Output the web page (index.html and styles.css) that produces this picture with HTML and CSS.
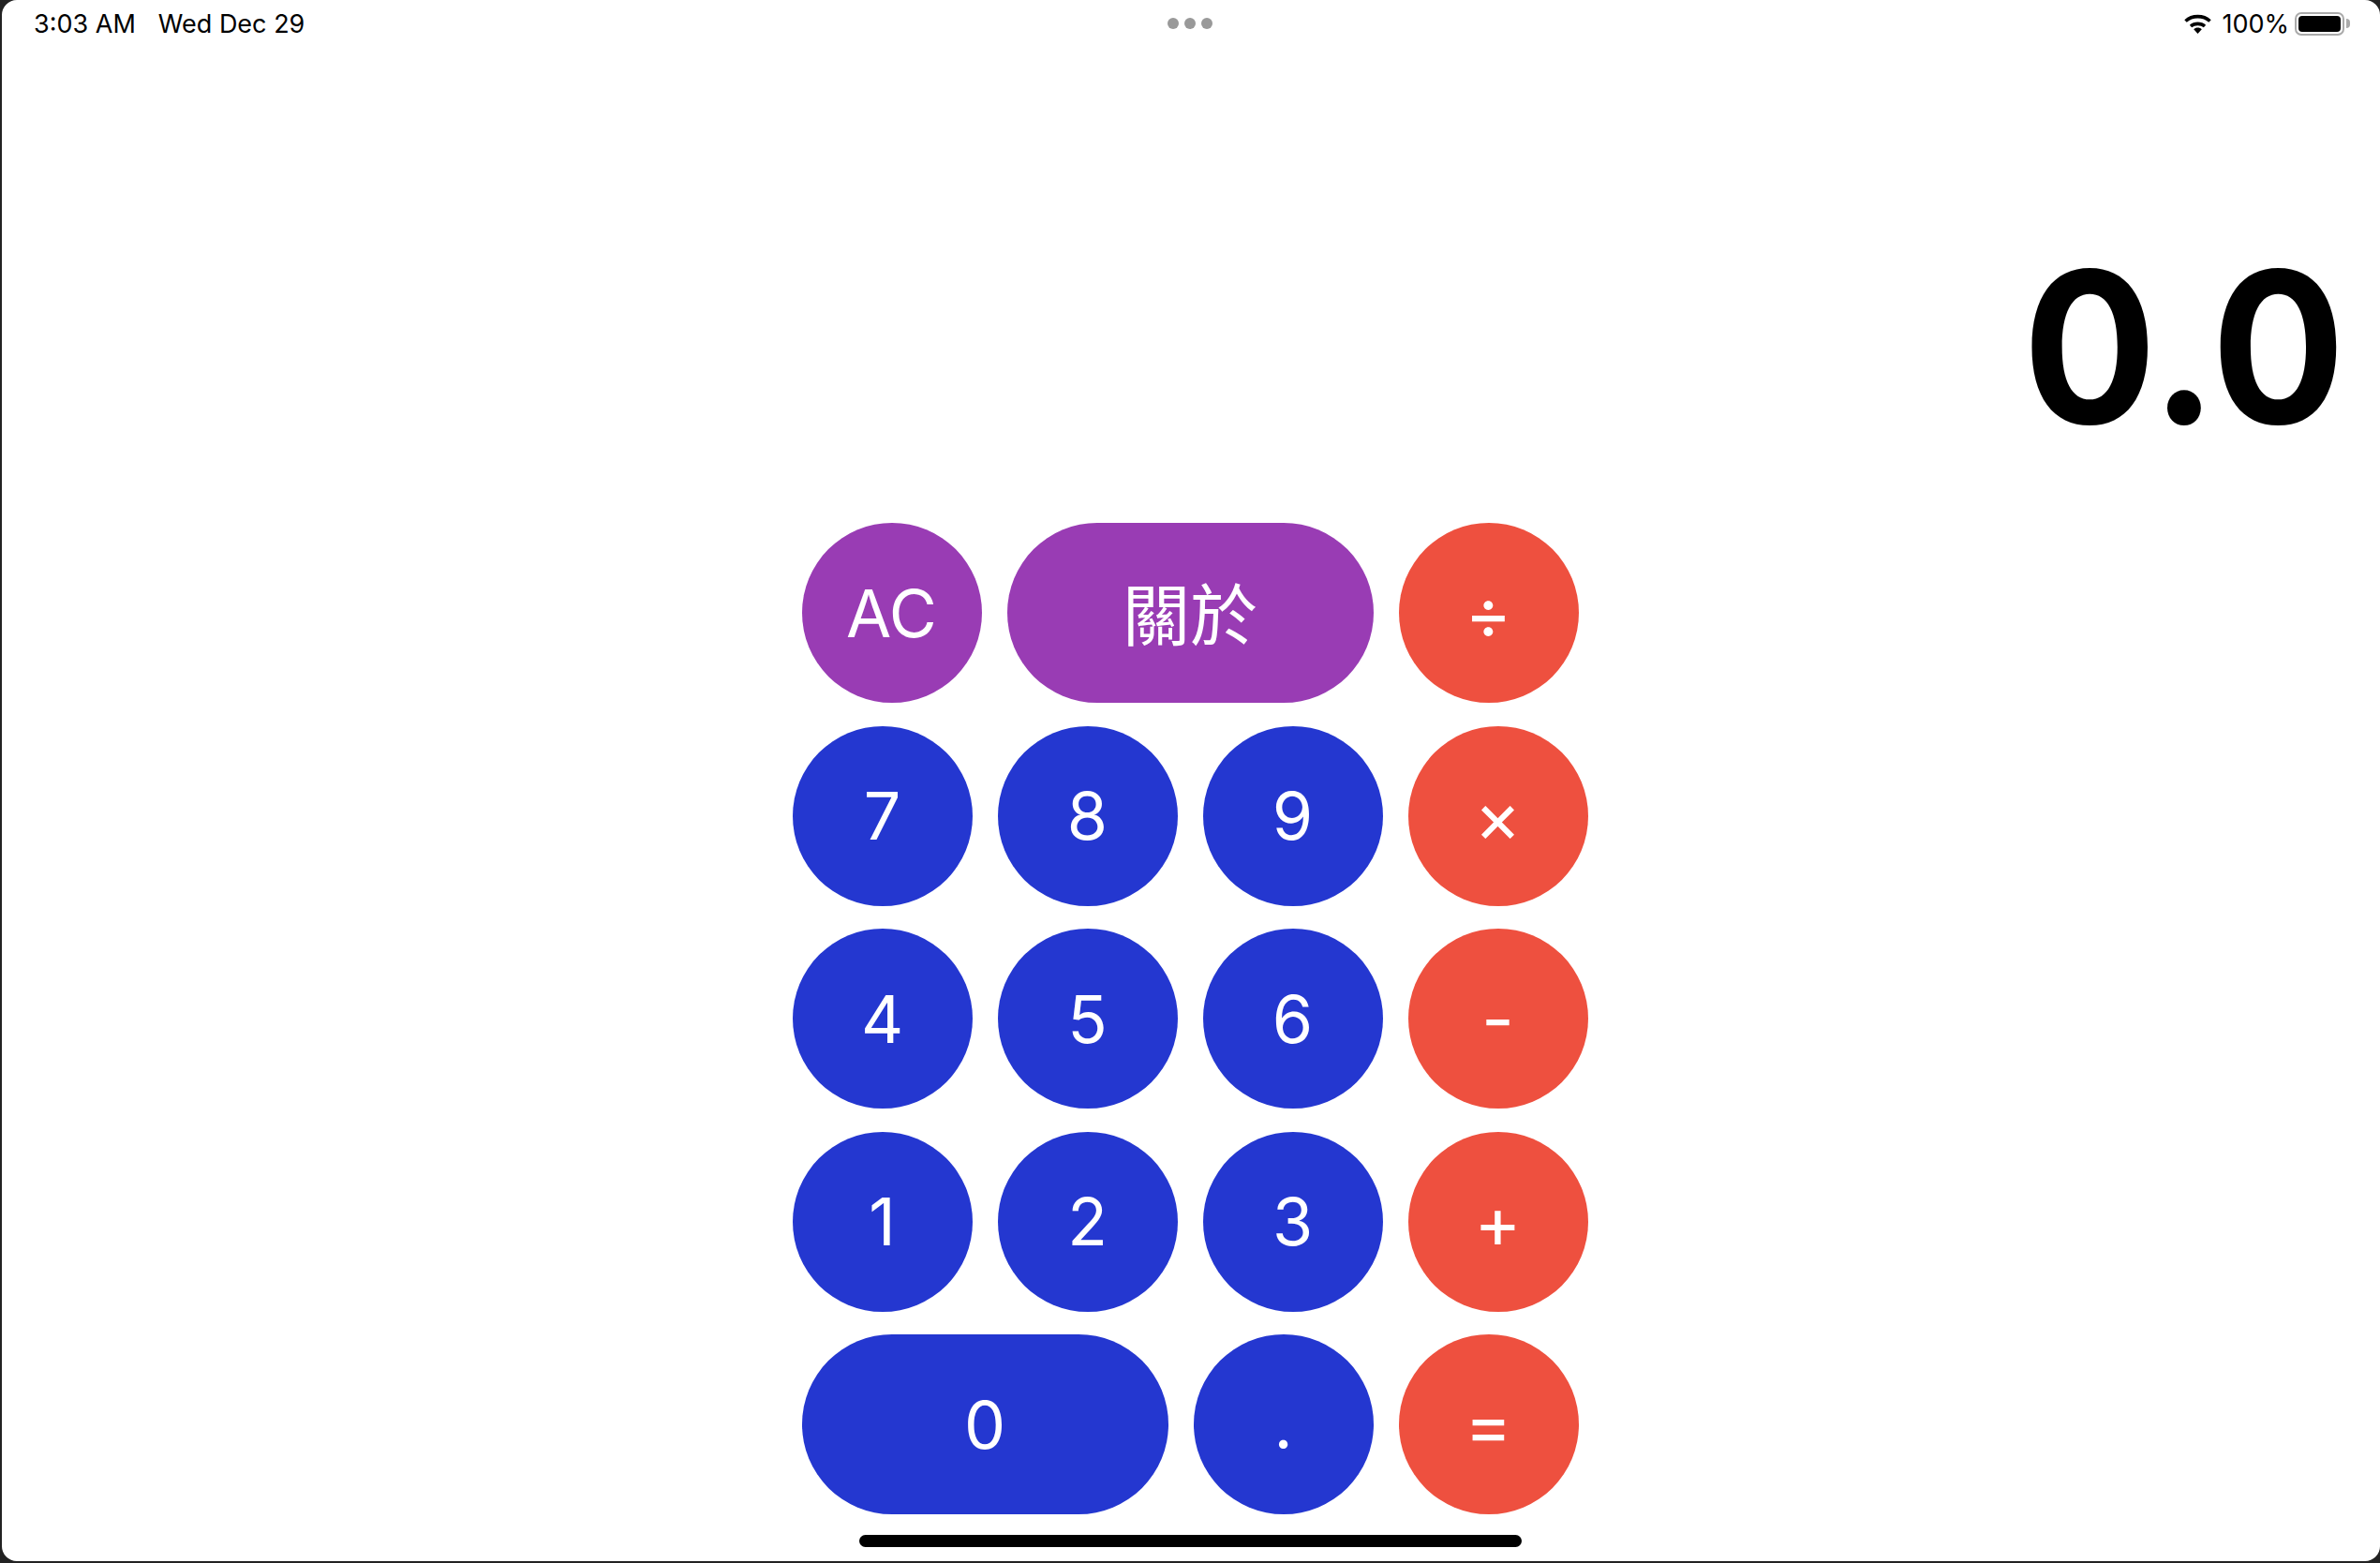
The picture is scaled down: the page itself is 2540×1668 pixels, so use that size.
FILE: index.html
```html
<!DOCTYPE html>
<html lang="en">
<head>
    <meta charset="UTF-8">
    <meta name="viewport" content="width=device-width, initial-scale=1.0">
    <title>Calculator</title>
    <link rel="stylesheet" href="styles.css">
</head>
<body>

<div class="screen">
    <header class="status">
        <div class="status-left">
            <span>3:03 AM</span>
            <span>Wed Dec 29</span>
        </div>
        <div class="dots"><i></i><i></i><i></i></div>
        <div class="status-right">
            <svg class="wifi" viewBox="0 0 31 22" width="31" height="22">
                <path d="M2.500 8.500C9.500 2 21.500 2 28.500 8.500" fill="none" stroke="#000" stroke-width="3.600"/>
                <path d="M8 14C12 10.500 19 10.500 23 14" fill="none" stroke="#000" stroke-width="3.600"/>
                <path d="M15.500 15.500C13.700 15.500 12.300 16.100 11.200 17.200L15.500 22L19.800 17.200C18.700 16.100 17.300 15.500 15.500 15.500Z"/>
            </svg>
            <span class="percent">100%</span>
            <div class="battery"><div class="battery-fill"></div></div>
            <div class="battery-cap"></div>
        </div>
    </header>

    <div class="display">0.0</div>

    <section class="keypad">
        <div class="row">
            <button class="key purple">AC</button>
            <button class="key wide purple cjk">關於</button>
            <button class="key red op">÷</button>
        </div>
        <div class="row">
            <button class="key blue">7</button>
            <button class="key blue">8</button>
            <button class="key blue">9</button>
            <button class="key red op">×</button>
        </div>
        <div class="row">
            <button class="key blue">4</button>
            <button class="key blue">5</button>
            <button class="key blue">6</button>
            <button class="key red op">-</button>
        </div>
        <div class="row">
            <button class="key blue">1</button>
            <button class="key blue">2</button>
            <button class="key blue">3</button>
            <button class="key red op">+</button>
        </div>
        <div class="row">
            <button class="key wide blue">0</button>
            <button class="key blue">.</button>
            <button class="key red op">=</button>
        </div>
    </section>

    <div class="home-bar"></div>
</div>

</body>
</html>
```

FILE: styles.css
```css
/* calculator screen */
html, body {
    margin: 0;
    padding: 0;
    background-color: #222;
}
.screen {
    box-sizing: border-box;
    width: 2538px;
    height: 1666px;
    margin-left: 2px;
    padding-right: 2px;
    background-color: #fff;
    border-radius: 16px;
    overflow: hidden;
    font-family: Inter, "Noto Sans CJK TC", sans-serif;
    color: #000;
    display: flex;
    flex-direction: column;
}
.status {
    height: 50px;
    display: grid;
    grid-template-columns: 1fr auto 1fr;
    align-items: center;
    padding: 0 30px;
    font-size: 27px;
}
.status-left {
    display: flex;
    gap: 24px;
    padding-left: 4px;
}
.status-right {
    display: flex;
    align-items: center;
    justify-content: flex-end;
}
.dots {
    display: flex;
    gap: 6px;
}
.dots i {
    display: block;
    width: 12px;
    height: 12px;
    border-radius: 50%;
    background-color: #999;
}
.wifi {
    margin-right: 10px;
}
.percent {
    margin-right: 6px;
}
.battery {
    box-sizing: border-box;
    width: 53px;
    height: 25px;
    padding: 2px;
    border: 2px solid #aaa;
    border-radius: 7px;
}
.battery-fill {
    height: 100%;
    background-color: #000;
    border-radius: 4px;
}
.battery-cap {
    width: 4px;
    height: 10px;
    margin-left: 2px;
    background-color: #aaa;
    border-radius: 0 4px 4px 0;
}
.display {
    height: 508px;
    box-sizing: border-box;
    padding: 211px 35px 0 0;
    text-align: right;
    font-size: 212px;
    font-weight: 700;
    line-height: 212px;
    transform: scaleY(1.06); /* SF digits are taller than Inter */
}
.keypad {
    display: flex;
    flex-direction: column;
    gap: 24.6px;
}
.row {
    display: flex;
    justify-content: center;
    gap: 27px;
}
.key {
    width: 192px;
    height: 192px;
    padding: 0;
    border: none;
    border-radius: 96px;
    color: #fff;
    font-family: inherit;
    font-size: 70px;
    font-weight: 400;
}
.key.wide {
    width: 391px;
}
.key.op {
    font-size: 76px;
}
.key.cjk {
    padding-bottom: 6px;
    font-size: 72px;
}
.purple {
    background-color: #993cb4;
}
.blue {
    background-color: #2437d0;
}
.red {
    background-color: #ee503f;
}
.home-bar {
    width: 707px;
    height: 13px;
    margin: 22px auto 0;
    background-color: #000;
    border-radius: 7px;
}
```
